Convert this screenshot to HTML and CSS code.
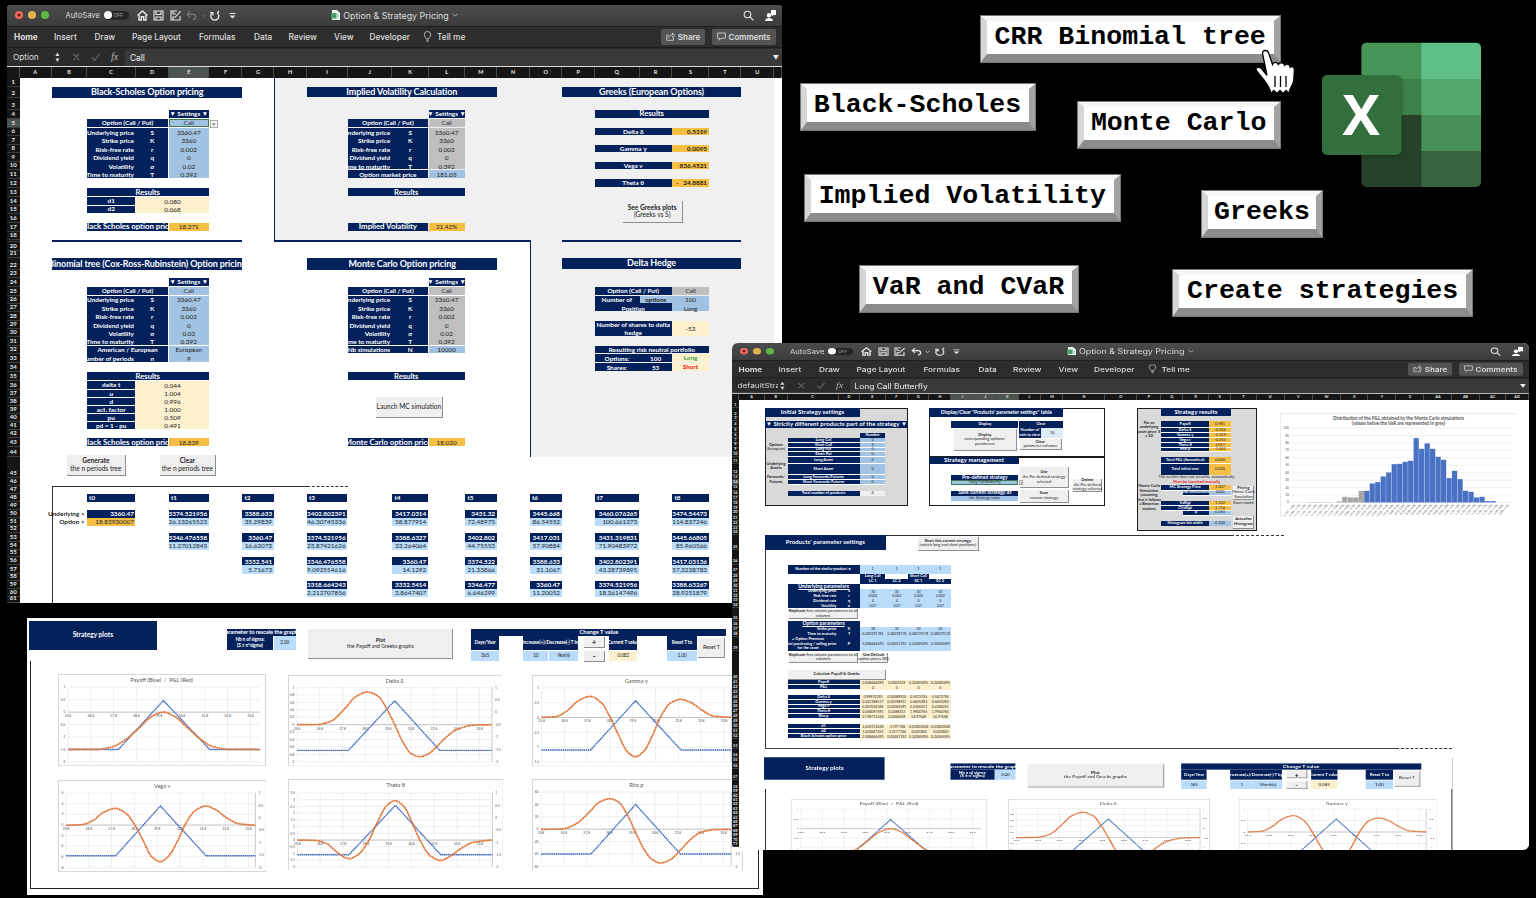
FILE: index.html
```html
<!DOCTYPE html>
<html lang="en">
<head>
<meta charset="utf-8">
<title>Option &amp; Strategy Pricing</title>
<link rel="stylesheet" href="styles.css">
</head>
<body>
<main class="stage">
  <section class="plots-panel" id="panel"></section>
  <section class="window window-main" id="win1"></section>
  <section class="window window-strategy" id="win2"></section>

  <div class="tag tag-crr">CRR Binomial tree</div>
  <div class="tag tag-bs">Black-Scholes</div>
  <div class="tag tag-mc">Monte Carlo</div>
  <div class="tag tag-iv">Implied Volatility</div>
  <div class="tag tag-greeks">Greeks</div>
  <div class="tag tag-var">VaR and CVaR</div>
  <div class="tag tag-strat">Create strategies</div>

  <svg class="excel" viewBox="1321 42 161 146" aria-label="Excel">
    <defs>
      <clipPath id="book"><rect x="1361.4" y="42.7" width="119.6" height="144.3" rx="5"/></clipPath>
      <filter id="soft" x="-20%" y="-20%" width="140%" height="140%"><feGaussianBlur stdDeviation="1.5"/></filter>
    </defs>
    <g clip-path="url(#book)">
      <rect x="1361" y="42" width="61" height="37" fill="#479658"/>
      <rect x="1421.4" y="42" width="60" height="37" fill="#5fc088"/>
      <rect x="1361" y="79" width="61" height="36" fill="#3d8049"/>
      <rect x="1421.4" y="79" width="60" height="36" fill="#53a96d"/>
      <rect x="1361" y="115" width="61" height="72" fill="#264129"/>
      <rect x="1421.4" y="115" width="60" height="36" fill="#479158"/>
      <rect x="1421.4" y="151" width="60" height="36" fill="#37633f"/>
      <rect x="1322" y="77" width="80" height="80" rx="5" fill="#0b2510" opacity=".35" filter="url(#soft)"/>
    </g>
    <rect x="1322" y="75" width="79.5" height="80" rx="5" fill="#336f3d"/>
    <text x="1361.3" y="135" class="excel-x" text-anchor="middle">X</text>
  </svg>

  <svg class="hand" viewBox="1253 47 44 50">
    <path d="M1262.6 54C1262 49.5 1267.5 49.5 1268.6 53L1272.5 64.5C1273.5 61.5 1277.3 61.6 1278.3 64.5C1280 61.8 1284 62.3 1284.7 65.3C1286.6 63.2 1290 64 1290.2 67.3C1292 65.8 1294.4 67 1294.4 70L1293.8 80C1293.3 85 1290 87 1288.8 93.4L1286 90.5L1283 93.4L1280 90.5L1277 93.4L1274 90.5L1270.8 93.4C1270 87 1266 82.5 1263.2 79L1256.2 70.5C1255 67 1259.5 66 1261.8 69L1267 75.3Z" fill="#fff" stroke="#000" stroke-width="1.3"/>
    <path d="M1275 76V87M1280.5 76V87M1286 76V87" stroke="#000" stroke-width="1.3"/>
  </svg>
</main>
<script src="app.js"></script>
</body>
</html>
```

FILE: styles.css
```css
* { box-sizing: border-box; }
body { margin: 0; background: #000; overflow: hidden; }
.stage { position: relative; width: 1536px; height: 898px; background: #000; overflow: hidden; font-family: Lato, "Open Sans", sans-serif; }

/* windows */
.window { position: absolute; overflow: hidden; background: #fff; }
.window-main { left: 7px; top: 5px; width: 775px; height: 598.4px; border-radius: 4px 4px 0 0; }
.window-strategy { left: 731.5px; top: 343.3px; width: 797.5px; height: 506.4px; border-radius: 6px; }
.chrome { height: 62px; display: flex; flex-direction: column; background: #2b2b2b; color: #dedede; font-family: Inter, "Open Sans", sans-serif; border-bottom: 1.5px solid #dcdcdc; }
.window-strategy .chrome { transform: scaleY(.818); transform-origin: 0 0; margin-bottom: -11.3px; }
.titlebar { height: 21.5px; display: flex; align-items: center; background: linear-gradient(#4b4b4b, #3c3c3c); border-bottom: 1px solid #1d1d1d; padding: 0 6px 0 8px; position: relative; }
.light { width: 8px; height: 8px; border-radius: 50%; margin-right: 5.2px; }
.red { background: radial-gradient(#7d1712 18%, #ee6a5e 35%); }
.amber { background: #e0b64c; }
.green { background: #5fb944; }
.autosave { font-size: 7.6px; margin-left: 11px; width: 38px; }
.toggle { width: 25px; height: 9px; border-radius: 5px; background: #262626; display: flex; align-items: center; font-size: 4.8px; color: #aaa; }
.toggle i { width: 8px; height: 8px; border-radius: 50%; background: #fff; margin-right: 2px; }
.quick { display: flex; align-items: center; margin-left: 8px; gap: 5.5px; }
.quick svg { width: 11px; height: 11px; }
.wtitle { position: absolute; left: 0; right: 0; display: flex; justify-content: center; align-items: center; gap: 3px; font-size: 8.9px; }
.wtitle svg { width: 9px; height: 10px; }
.wtitle .chev { width: 6px; height: 4px; }
.title-end { margin-left: auto; display: flex; align-items: center; gap: 11px; }
.title-end svg { width: 11px; height: 11px; }
.menu { height: 21.5px; display: flex; align-items: center; font-size: 8.3px; font-weight: 500; border-bottom: 1px solid #1c1c1c; background: #2d2d2d; padding-left: 7px; }
.menu span { white-space: nowrap; }
.menu span:first-child { font-weight: 700; }
.menu svg { width: 9px; height: 11px; margin-right: 5px; }
.pill { height: 15.5px; background: #545454; border-radius: 2px; display: flex; align-items: center; justify-content: center; margin-right: 6.5px; font-size: 8px; font-weight: 600; }
.pill svg { width: 9px; height: 9px; margin-right: 3px; }
.pill-share { width: 44px; margin-left: auto; }
.pill-comments { width: 64px; }
.formula { flex: 1; display: flex; align-items: center; font-size: 8.2px; }
.namebox { width: 40px; margin-left: 6px; overflow: hidden; white-space: nowrap; }
.formula svg { width: 68px; height: 14px; }
.entry { flex: 1; background: #393939; align-self: stretch; display: flex; align-items: center; padding: 0 3px 0 5px; color: #f0f0f0; margin-left: 4px; margin-top: 1px; font-size: 8.4px; }
.entry b { margin-left: auto; font-size: 6px; }

/* sheets */
.sheet { display: grid; position: relative; align-content: start; background: #fff; }
.sheet > * { min-width: 0; min-height: 0; }
.ch, .rh { background: #161616; color: #e8e8e8; font-weight: 700; display: flex; align-items: center; justify-content: center; line-height: 1; }
.ch { font-size: 5.5px; border-right: .7px solid #4a4a4a; }
.rh { font-size: 6px; align-items: flex-end; border-bottom: .7px solid #3d3d3d; padding-bottom: 1px; }
.window-strategy .ch, .window-strategy .rh { font-size: 3.8px; padding-bottom: .4px; }
.ch.on, .rh.on { background: #4c5450; }
.c { display: flex; align-items: center; justify-content: center; text-align: center; white-space: pre; line-height: 1.15; font-size: 6.4px; color: #222; margin-right: .9px; }
.m { margin-bottom: 1px; }
.full { margin: 0; }
.n { background: #04215c; color: #fff; font-weight: 700; }
.t { color: #fff; font-weight: 700; }
.h1 { font-size: 9px; letter-spacing: -.1px; }
.h2 { font-size: 7.6px; }
.h3 { font-size: 7.9px; letter-spacing: -.05px; }
.r { justify-content: flex-end; padding-right: 1.5px; }
.l { justify-content: flex-start; padding-left: 2px; }
.b { background: #a2c2e3; }
.lb { background: #b9dcfa; }
.vlb { background: #ddebf7; }
.g { background: #bfbfbf; }
.lg { background: #d9d9d9; }
.bg { background: #f0f0f0; }
.y { background: #fcf0ce; }
.o { background: #f5bf45; }
.bold { font-weight: 700; }
.posc { color: #3fa544; font-weight: 700; }
.negc { color: #e8201c; font-weight: 700; }
.u { text-decoration: underline; }
.sel { border: 1px solid #3d7a4d; }
.box { border: 1.2px solid #1c1c1c; margin: 0; }
.bt { border-top: 1.2px solid #333; margin: 0; }
.bl { border-left: 1.2px solid #333; margin: 0; }
.bb { border-bottom: 1.2px solid #444; margin: 0; }
.dash { border-top: 1.5px dashed #333; margin: 0; }
.dashb { border-bottom: 1.3px dashed #333; margin: 0; }
.nl { border-left: 1.7px solid #04215c; margin: 0; }
.nt { border-top: 2px solid #04215c; margin: 0; }
.nr { border-right: 1.7px solid #04215c; margin: 0; }
.line { background: #04215c; margin: 0; }
.s .c, .s.c { font-size: 4px; }
.wt { border-bottom: .8px solid #fff; }
.window-strategy .c { font-size: 3.9px; margin-right: .6px; }
.window-strategy .c.m { margin-bottom: .6px; }
.window-strategy .c.h1 { font-size: 6px; letter-spacing: .1px; }
.window-strategy .c.h2 { font-size: 5px; }
.window-strategy .c.full, .window-strategy .c.box { margin: 0; }
.window-strategy .c.v { font-size: 3.5px; }

/* objects that float over the cells */
.obj { position: absolute; }
.btn { background: #efefef; border-right: 1.2px solid #8e8e8e; border-bottom: 1.2px solid #8e8e8e; display: flex; flex-direction: column; align-items: center; justify-content: center; text-align: center; font-size: 6.6px; line-height: 1.14; color: #222; white-space: nowrap; }
.window-strategy .btn { font-size: 4px; }
.drop { background: #f4f4f4; border: .6px solid #aaa; color: #777; font-size: 5px; display: flex; align-items: center; justify-content: center; }

/* strategy plots */
.plots-panel { position: absolute; left: 27px; top: 618.4px; width: 736px; height: 277px; background: #fff; overflow: hidden; }
.plots { position: absolute; left: 2.5px; top: 3px; width: 729.5px; height: 268px; border: 1.6px solid #222; background: #fff; }
.window-strategy .plots { left: 33px; top: 414.4px; transform: scale(.9416, .775); transform-origin: 0 0; }
.plots .sheet { margin: -1.6px; }
.plots .c, .window-strategy .plots .c { font-size: 4.8px; margin: 0 .6px 0 0; letter-spacing: -.1px; }
.plots .c.h1, .window-strategy .plots .c.h1 { font-size: 6.6px; letter-spacing: 0; }
.plots .c.h2, .window-strategy .plots .c.h2 { font-size: 5.8px; }
.plots .btn, .window-strategy .plots .btn { font-size: 5.2px; }
.plots .btn.big, .window-strategy .plots .btn.big { font-size: 8px; font-weight: 700; line-height: 1; }
.chart { overflow: hidden; }
.chart text { font-family: Lato, sans-serif; fill: #555; font-size: 3.3px; }
.chart .ct { font-size: 5.6px; }
.frame { fill: #fff; stroke: #bdbdbd; stroke-width: .6; }
.grid { stroke: #dedede; stroke-width: .5; fill: none; }
.axis { stroke: #aaa; stroke-width: .6; }
.blue { stroke: #4169c0; stroke-width: 1.4; fill: none; stroke-dasharray: 1.6 .5; }
.orange { stroke: #df7438; stroke-width: 1.7; fill: none; stroke-dasharray: 2.2 .4; }
.chart .ht { font-size: 4.6px; font-weight: 700; }
.chart .tiny { font-size: 2.7px; }

/* labels on the desktop */
.tag { position: absolute; display: flex; align-items: center; justify-content: center; background: #fff; border-style: solid; border-width: 5px 6px 8px 6px; border-color: #f7f7f7 #a3a3a3 #8b8b8b #d6d6d6; font: 700 26.6px/1 "Liberation Mono", "Courier New", monospace; color: #000; white-space: nowrap; height: 45.4px; outline: .6px solid #777; outline-offset: -.6px; }
.tag-crr { left: 980.8px; top: 16.3px; width: 298.8px; }
.tag-bs { left: 800.5px; top: 84.4px; width: 234px; }
.tag-mc { left: 1077.8px; top: 102.4px; width: 201.8px; }
.tag-iv { left: 804.8px; top: 175.4px; width: 315px; }
.tag-greeks { left: 1201.6px; top: 191.2px; width: 120.8px; }
.tag-var { left: 859.5px; top: 266.2px; width: 218px; }
.tag-strat { left: 1173px; top: 270.2px; width: 299.3px; }
.excel { position: absolute; left: 1321px; top: 42px; width: 161px; height: 146px; }
.excel-x { font: 700 56px "Open Sans", sans-serif; fill: #fff; }
.hand { position: absolute; left: 1253px; top: 47px; width: 44px; height: 50px; }
```

FILE: app.js
```js
const NS = { stroke: 'fill="none" stroke="#e6e6e6" stroke-width="1.1"' };

/* ---------- window chrome ---------- */
function chrome(name, entry, undo) {
  const menus = [['Home', 40], ['Insert', 40.5], ['Draw', 37.5], ['Page Layout', 67], ['Formulas', 55], ['Data', 34.5], ['Review', 45.5], ['View', 35.5], ['Developer', 53.5]];
  return `<header class="chrome">
  <div class="titlebar">
    <i class="light red"></i><i class="light amber"></i><i class="light green"></i>
    <span class="autosave">AutoSave</span><span class="toggle"><i></i>OFF</span>
    <div class="quick">
      <svg viewBox="0 0 11 11" ${NS.stroke}><path d="M.6 5.6L5.5 1L10.4 5.6M2 5V10H4.3V6.8H6.7V10H9V5" stroke-width="1.4"/></svg>
      <svg viewBox="0 0 11 11" ${NS.stroke}><path d="M1 1H10V10H1ZM3 1V4.5H8V1M3 10V7H8V10"/></svg>
      <svg viewBox="0 0 11 11" ${NS.stroke}><path d="M10 6V10H1V1H7M3 1V4H6M3 10V7H5M5 7.5L10.6 1.2"/></svg>
      <svg viewBox="0 0 11 11" fill="none" stroke="${undo}" stroke-width="1.3"><path d="M4 1.5L1.2 4.3L4 7M1.4 4.3H7C10.5 4.3 10.5 9.5 7 9.5"/></svg>
      <svg viewBox="0 0 11 11" style="width:5px;margin:0 -2px" fill="none" stroke="${undo}" stroke-width="1.8"><path d="M1 4L5.5 8L10 4"/></svg>
      <svg viewBox="0 0 11 11" ${NS.stroke}><path d="M3 3.2A4 4 0 1 0 8.3 3M1 2.6H4V5.6M8.4 3L10 1" stroke-width="1.3"/></svg>
      <svg viewBox="0 0 11 11" style="margin-left:1px" fill="#e6e6e6"><path d="M2.5 3H8.5V4H2.5ZM2.5 5.5H8.5L5.5 8.5Z"/></svg>
    </div>
    <div class="wtitle"><svg viewBox="0 0 9 10"><path d="M1 0H6L9 3V10H1Z" fill="#e9f3ec"/><rect y="3" width="5.5" height="5.5" fill="#4d9d73"/><path d="M5.5 5H8M5.5 7H8" stroke="#8fc3a5"/></svg><span>Option &amp; Strategy Pricing</span><svg class="chev" viewBox="0 0 6 4" fill="none" stroke="#aaa"><path d="M.5 .7L3 3.2L5.5 .7"/></svg></div>
    <div class="title-end">
      <svg viewBox="0 0 11 11" ${NS.stroke}><circle cx="4.5" cy="4.5" r="3.3"/><path d="M7 7L10.4 10.4"/></svg>
      <svg viewBox="0 0 11 11" fill="#fff"><circle cx="4" cy="5.2" r="2.2"/><path d="M0 11C0 7 8 7 8 11ZM6 0H11V5H8.5L7 6.5V5H6Z"/></svg>
    </div>
  </div>
  <nav class="menu">${menus.map(([t, w]) => `<span style="width:${w}px">${t}</span>`).join('')}
    <svg viewBox="0 0 9 12" fill="none" stroke="#cfcfcf" stroke-width=".9"><path d="M3 8.5C3 6.8 1 6.5 1 4A3.5 3.5 0 0 1 8 4C8 6.5 6 6.8 6 8.5ZM3.2 10H5.8M3.6 11.3H5.4"/></svg><span>Tell me</span>
    <div class="pill pill-share"><svg viewBox="0 0 9 9" fill="none" stroke="#ddd" stroke-width=".8"><path d="M3 3H.8V8.3H7.5V6M2.6 6C3 3.8 4.5 3 6.5 3V1L8.7 3.6L6.5 5.8V4.2"/></svg>Share</div>
    <div class="pill pill-comments"><svg viewBox="0 0 9 9" fill="none" stroke="#ddd" stroke-width=".8"><path d="M.6 1H8.4V6.3H4L2.4 8.2V6.3H.6Z"/></svg>Comments</div>
  </nav>
  <div class="formula"><span class="namebox">${name}</span>
    <svg viewBox="0 0 68 14"><path d="M2.4 6L4.4 2.5L6.4 6ZM2.4 8.5L4.4 12L6.4 8.5Z" fill="#ddd"/><path d="M20.5 4L26 10M26 4L20.5 10M39 7.5L41.5 10.3L46.5 4" fill="none" stroke="#666" stroke-width="1.2"/><text x="58" y="10" font-family="Liberation Serif" font-style="italic" font-size="10" fill="#bbb">fx</text></svg>
    <div class="entry">${entry}<b>▼</b></div></div>
</header>`;
}

/* ---------- spreadsheet grid ---------- */
const colNo = s => [...s].reduce((n, ch) => n * 26 + ch.charCodeAt(0) - 64, 0);
const colName = n => n > 26 ? 'A' + String.fromCharCode(38 + n) : String.fromCharCode(64 + n);
const tracks = b => b.slice(1).map((v, i) => +(v - b[i]).toFixed(2) + 'px').join(' ');

function area(range) {
  const [a, z = a] = range.split(':');
  const p = /([A-Z]+)(\d+)/;
  const [, ac, ar] = a.match(p), [, zc, zr] = z.match(p);
  return `grid-area:${+ar + 1}/${colNo(ac) + 1}/${+zr + 2}/${colNo(zc) + 2}`;
}
const cell = ([range, cls, text = '']) => `<div class="c ${cls}" style="${area(range)}">${text}</div>`;

function sheet({ xs, ys, cells, objects = '', onCols = '', onRows = '', heads = true, rowNames }) {
  let h = '';
  if (heads) {
    h += '<div class="ch" style="grid-area:1/1"></div>';
    for (let i = 1; i < xs.length - 1; i++) h += `<div class="ch ${onCols.includes(colName(i)) ? 'on' : ''}" style="grid-area:1/${i + 1}">${i > 29 || (xs.length < 25 && i > 21) ? (i === 30 ? 'AD' : '') : colName(i)}</div>`;
    for (let i = 1; i < ys.length - 1; i++) h += `<div class="rh ${onRows === i ? 'on' : ''}" style="grid-area:${i + 1}/1">${ys[i + 1] - ys[i] < 3 ? '' : i}</div>`;
  }
  return `<div class="sheet" style="grid-template-columns:${tracks(xs)};grid-template-rows:${tracks(ys)}">${h}${cells.map(cell).join('')}${objects}</div>`;
}
/* object box given in the coordinates of the sheet's own rulers */
const at = (s, x, y, x2, y2) => `left:${(x - s.xs[0]).toFixed(1)}px;top:${(y - s.ys[0]).toFixed(1)}px;width:${(x2 - x).toFixed(1)}px;height:${(y2 - y).toFixed(1)}px`;
const btn = (s, x, y, x2, y2, html, cls = '') => `<div class="obj btn ${cls}" style="${at(s, x, y, x2, y2)}"><span>${html}</span></div>`;

/* ---------- charts ---------- */
function smooth(p) {
  const n = p.length, d = [], m = [];
  for (let i = 0; i < n - 1; i++) d[i] = (p[i + 1][1] - p[i][1]) / (p[i + 1][0] - p[i][0]);
  m[0] = d[0]; m[n - 1] = d[n - 2];
  for (let i = 1; i < n - 1; i++) m[i] = d[i - 1] * d[i] <= 0 ? 0 : 2 * d[i - 1] * d[i] / (d[i - 1] + d[i]);
  let s = `M${p[0]}`;
  for (let i = 0; i < n - 1; i++) {
    const k = (p[i + 1][0] - p[i][0]) / 3;
    s += `C${p[i][0] + k} ${p[i][1] + m[i] * k} ${p[i + 1][0] - k} ${p[i + 1][1] - m[i + 1] * k} ${p[i + 1]}`;
  }
  return s;
}
function chart(c) {
  const [fx, fy, fx2, fy2] = c.frame, [px, py, px2, py2] = c.plot;
  let g = '', t = '';
  c.left.forEach((v, i) => {
    const y = py + (py2 - py) * i / (c.left.length - 1);
    g += `M${px} ${y}H${px2}`;
    t += `<text x="${px - 2.5}" y="${y + 1.2}" text-anchor="end">${v}</text>`;
  });
  for (let i = 0; px + i * 22.8 < px2; i++) {
    const x = px + i * 22.8;
    g += `M${x} ${py}V${py2}`;
    t += `<text x="${x}" y="${c.zero + 5}" text-anchor="middle">${(25.8 + i).toFixed(1)}</text>`;
  }
  if (c.right) [1, 0.5, 0, -0.5, -1, -1.5, -2].forEach((v, i) => t += `<text x="${px2 + 3}" y="${py + (py2 - py) * i / 6 + 1.2}">${v}</text>`);
  return `<svg class="obj chart" style="left:${fx - 29.5}px;top:${fy - 621.4}px;width:${fx2 - fx}px;height:${fy2 - fy}px" viewBox="${fx} ${fy} ${fx2 - fx} ${fy2 - fy}">
  <rect class="frame" x="${fx + .3}" y="${fy + .3}" width="${fx2 - fx - .6}" height="${fy2 - fy - .6}"/><path class="grid" d="${g}"/><path class="axis" d="M${px} ${c.zero}H${px2}${c.right ? `M${px2} ${py}V${py2}` : ''}"/>
  <text class="ct" x="${c.tx}" y="${fy + 7.6}" text-anchor="middle">${c.title}</text>${t}
  <path class="blue" d="M${c.blue.map(q => q.join(' ')).join('L')}"/><path class="orange" d="${smooth(c.orange)}"/></svg>`;
}
const charts = [
  { title: 'Payoff (Blue)&#160; / &#160;P&amp;L (Red)', tx: 162, frame: [58.3, 674.5, 266.3, 766.7], plot: [68.3, 687.7, 260, 762.3], zero: 712.7, left: [1, 0.5, 0, -0.5, -1, -1.5, -2],
    blue: [[68.3, 750], [118.7, 750], [163.7, 701], [210, 750], [260, 750]],
    orange: [[68.3, 750], [98, 749.8], [112, 747.5], [126, 740], [140, 728], [152, 717], [163.7, 712.7], [175, 717], [187, 727.5], [200, 739], [213, 747], [228, 749.8], [260, 750]] },
  { title: 'Delta δ', tx: 395, right: 1, frame: [288.3, 675.3, 502.9, 766.7], plot: [297.3, 687.7, 492.3, 762.3], zero: 725, left: [1, 0.8, 0.6, 0.4, 0.2, 0, -0.2, -0.4, -0.6, -0.8, -1],
    blue: [[297.3, 750.7], [348.7, 750.7], [395, 701], [440, 750.7], [492.3, 750.7]],
    orange: [[297.3, 725], [318, 724.8], [332, 721], [345, 709], [356, 697], [367.7, 692.3], [379, 697], [387, 709], [395, 725], [403, 742], [411, 753.5], [420, 757], [429, 754], [437, 747], [447, 737], [458, 729.5], [475, 725.4], [492.3, 725]] },
  { title: 'Gamma γ', tx: 637, right: 1, frame: [532.7, 675.3, 743.3, 766.7], plot: [542.3, 688.2, 731.9, 762.3], zero: 717.8, left: [1, 0.5, 0, -0.5, -1, -1.5],
    blue: [[542.3, 750.3], [591.3, 750.3], [636.3, 701], [681.7, 750.3], [731.9, 750.3]],
    orange: [[542.3, 717.7], [556, 717], [568, 711], [579, 701], [591, 696.7], [602, 703], [611, 718], [620, 737], [628, 752], [636.3, 757], [645, 751], [653, 736], [662, 716], [671, 703.5], [681, 699.7], [691, 702.5], [702, 710], [714, 716.3], [731.9, 717.7]] },
  { title: 'Vega ν', tx: 162.5, right: 1, frame: [58.3, 780.3, 266.7, 872.3], plot: [66.3, 793.3, 255.7, 867.7], zero: 825.4, left: [6, 4, 2, 0, -2, -4, -6, -8],
    blue: [[66.3, 856], [116, 856], [160.7, 806.3], [206.3, 856], [255.7, 856]],
    orange: [[66.3, 825.7], [82, 825], [93, 821], [104, 812.5], [115.7, 808.7], [126, 813.5], [134, 823.5], [144, 842], [152, 857], [160.7, 862], [170, 855], [178, 841], [187, 822], [196, 810.5], [206.3, 806.3], [216, 810], [226, 817.5], [239, 824], [255.7, 825.7]] },
  { title: 'Theta θ', tx: 396, right: 1, frame: [288.3, 779.3, 503.7, 871], plot: [297.7, 793.3, 492.7, 867.3], zero: 840.4, left: [3.5, 3, 2.5, 2, 1.5, 1, 0.5, 0, -0.5, -1, -1.5, -2],
    blue: [[297.7, 855], [349.3, 855], [395.7, 805.7], [441, 855], [492.7, 855]],
    orange: [[297.7, 840.3], [316, 840.8], [327, 844], [338, 853], [349.3, 859], [359, 854.5], [369, 841], [378, 822], [387, 806], [395.3, 801], [404, 806.5], [412, 822], [421, 842], [431, 856.5], [441, 860.7], [450, 857], [461, 849], [474, 842.5], [492.7, 840.3]] },
  { title: 'Rho ρ', tx: 637, right: 1, frame: [532.7, 779.3, 743.3, 871], plot: [541.7, 792.3, 731.9, 866.7], zero: 829.5, left: [60, 40, 20, 0, -20, -40, -60],
    blue: [[541.7, 854.3], [591.7, 854.3], [636.3, 804.7], [681, 854.3], [731.9, 854.3]],
    orange: [[541.7, 829.7], [563, 829.2], [577, 824], [590, 812.5], [600, 802.5], [610.7, 799], [620, 803], [628, 815], [636, 832], [645, 850], [653, 860], [661.7, 863.3], [671, 860], [681, 850.5], [691, 840], [702, 832.5], [716, 829.9], [731.9, 829.7]] }
];

function plots(step, unit, t, list) {
  const s = { xs: [29.5, 158, 227.3, 274.3, 297, 309, 454, 472, 500, 524, 549.5, 579.5, 610, 638.5, 668, 697.8, 727.6], ys: [621.4, 629.3, 636.6, 650.3, 651.2, 661.7], heads: false };
  /* here A1 is the first track, so the areas start one line earlier than in a headed sheet */
  const cells = [['A', 0, 'A', 2, 'n h1', 'Strategy plots'], ['C', 1, 'D', 1, 'n h2', 'Parameter to rescale the graphs'], ['C', 2, 'C', 2, 'n', 'Nb n of sigma:\n(S ± n*sigma)'], ['D', 2, 'D', 2, 'lb', '2.00'],
    ['H', 1, 'P', 1, 'n h2 h1', 'Change T value'], ['H', 2, 'H', 2, 'n', 'Days/Year'], ['H', 4, 'H', 4, 'lb', '365'], ['J', 2, 'K', 2, 'n', 'Increase(+)/Decrease(-) T by'], ['J', 4, 'J', 4, 'lb', step], ['K', 4, 'K', 4, 'lb', unit],
    ['M', 2, 'M', 2, 'n', 'Current T value'], ['M', 4, 'M', 4, 'y', t], ['O', 2, 'O', 2, 'n', 'Reset T to'], ['O', 4, 'O', 4, 'lb', '1.00']]
    .map(([a, r, z, r2, cls, tx]) => `<div class="c ${cls}" style="grid-area:${r + 1}/${colNo(a)}/${r2 + 2}/${colNo(z) + 1}">${tx}</div>`).join('');
  const o = btn(s, 309, 629.7, 454, 659.7, '<b>Plot</b><br>the Payoff and Greeks graphs') + btn(s, 584.5, 638, 606, 648.3, '+', 'big') + btn(s, 584.5, 652, 606, 662.3, '-', 'big') + btn(s, 699, 638.5, 726, 659, 'Reset T');
  return `<div class="plots"><div class="sheet" style="grid-template-columns:${tracks(s.xs)};grid-template-rows:${tracks(s.ys)}">${cells}${o}${list.map(chart).join('')}</div></div>`;
}

/* ---------- window 1: pricing ---------- */
const s1 = {
  xs: [7, 19.5, 52, 87, 136.3, 169, 209.5, 242.5, 274.5, 307, 348, 392.5, 428.7, 465.5, 497.5, 530, 562.5, 595, 639.7, 672.5, 709.5, 741.5, 774, 782],
  ys: [67, 78, 87, 98, 109.5, 118.7, 128, 136.5, 145, 153.5, 162, 170.5, 179, 188, 197.4, 205.6, 213.6, 223, 232, 240, 242.5, 251, 258, 270, 278, 287, 295.6, 304, 312.5, 321, 329.5, 337.5, 346, 354.3, 363, 372, 381.5, 390, 398, 406, 414, 422, 430, 438.5, 447.5, 457, 478, 486, 494, 502.5, 509.7, 518, 526.5, 533.5, 541.7, 550, 557.2, 565.5, 574, 581.2, 589.2, 597.4, 603.4],
  onCols: 'E', onRows: 5
};
function block(a, b, v, r, rows, vc) {
  const out = [[`${v}${r - 1}`, 'n m bold', '▼ Settings ▼'], [`${a}${r}:${b}${r}`, 'n m', 'Option (Call / Put)'], [`${v}${r}`, vc + ' m', 'Call'], [`${a}${r + 1}:${b}${r + rows.length}`, 'n m'], [`${v}${r + 1}:${v}${r + rows.length}`, vc + ' m']];
  rows.forEach(([l, s, x], i) => out.push([`${a}${r + 1 + i}`, 't r', l], [`${b}${r + 1 + i}`, 't', s], [`${v}${r + 1 + i}`, '', x]));
  return out;
}
const base = [['Underlying price', 'S', '3360.47'], ['Strike price', 'K', '3360'], ['Risk-free rate', 'r', '0.002'], ['Dividend yield', 'q', '0'], ['Volatility', 'σ', '0.02'], ['Time to maturity', 'T', '0.392']];
const noVol = base.filter(r => r[0] !== 'Volatility');
const tree = {
  C: [['3360.47', '18.83930007']],
  E: [['3374.521956', '26.13265523'], ['3346.476558', '11.27012845']],
  G: [['3388.633', '35.29839'], ['3360.47', '16.62073'], ['3332.541', '5.71673']],
  I: [['3402.802391', '46.30745336'], ['3374.521956', '23.87421626'], ['3346.476558', '9.092554616'], ['3318.664243', '2.212707856']],
  K: [['3417.0314', '58.877914'], ['3388.6327', '33.264064'], ['3360.47', '14.1292'], ['3332.5414', '3.8647407']],
  M: [['3431.32', '72.48975'], ['3402.802', '44.75553'], ['3374.522', '21.33866'], ['3346.477', '6.646299']],
  O: [['3445.668', '86.54552'], ['3417.031', '57.90884'], ['3388.633', '31.1067'], ['3360.47', '11.20052']],
  Q: [['3460.076265', '100.661273'], ['3431.319831', '71.90483972'], ['3402.802391', '43.38739895'], ['3374.521956', '18.36147496']],
  S: [['3474.54473', '114.837246'], ['3445.66805', '85.960566'], ['3417.03136', '57.3238783'], ['3388.63267', '28.9251879']]
};
const cells1 = [
  ['H1:U18', 'bg nl'], ['O19:U44', 'bg nl'], ['H19:N19', 'nt'],
  ['B19:F19', 'line'], ['P19:T19', 'line'],
  ['B2:F2', 'n h1 full', 'Black-Scholes Option pricing'], ['I2:M2', 'n h1 m', 'Implied Volatility Calculation'], ['P2:T2', 'n h1 m', 'Greeks (European Options)'],
  ['B22:F22', 'n h1 full', 'Binomial tree (Cox-Ross-Rubinstein) Option pricing'], ['I22:M22', 'n h1 full', 'Monte Carlo Option pricing'], ['P22:T22', 'n h1 m', 'Delta Hedge'],
  ...block('C', 'D', 'E', 5, base, 'b'), ['E5', 'sel m'],
  ['C13:E13', 'n m h2', 'Results'], ['C14', 'n m', 'd1'], ['C15', 'n m', 'd2'], ['D14:E15', 'y m'], ['D14:E14', '', '0.080'], ['D15:E15', '', '0.068'],
  ['C17:D17', 'n m h3', 'Black Scholes option price'], ['E17', 'o m', '18.371'],
  ...block('J', 'K', 'L', 5, noVol, 'g'), ['J11:K11', 'n m', 'Option market price'], ['L11', 'b m', '181.05'],
  ['J13:L13', 'n m h2', 'Results'], ['J17:K17', 'n m h3', 'Implied Volatility'], ['L17', 'o m', '21.42%'],
  ['Q4:S4', 'n m h2', 'Results'],
  ...[['Delta δ', '0.5319'], ['Gamma γ', '0.0095'], ['Vega ν', '836.4521'], ['Theta θ', '-&#160;&#160; 24.8881']].flatMap(([l, v], i) => [[`Q${6 + 2 * i}:R${6 + 2 * i}`, 'n m', l], [`S${6 + 2 * i}`, 'o m r bold', v]]),
  ...block('C', 'D', 'E', 25, base, 'b'), ['C32:D33', 'n m'], ['E32:E33', 'b m'], ['C32:D32', 't', 'American / European'], ['E32', '', 'European'], ['C33', 't r', 'Number of periods'], ['D33', 't', 'n'], ['E33', '', '9'],
  ['C35:E35', 'n m h2', 'Results'], ['D36:E41', 'y m'],
  ...[['delta t', '0.044'], ['u', '1.004'], ['d', '0.996'], ['act. factor', '1.000'], ['pu', '0.509'], ['pd = 1 - pu', '0.491']].flatMap(([l, v], i) => [[`C${36 + i}`, 'n wt', l], [`D${36 + i}:E${36 + i}`, '', v]]),
  ['C43:D43', 'n m h3', 'Black Scholes option price'], ['E43', 'o m', '18.839'],
  ...block('J', 'K', 'L', 25, base, 'g'), ['J32:K32', 'n m'], ['J32', 't r', 'Nb simulations'], ['K32', 't', 'N'], ['L32', 'b m', '10000'],
  ['J35:L35', 'n m h2', 'Results'], ['J43:K43', 'n m h3', 'Monte Carlo option price'], ['L43', 'o m', '18.020'],
  ['Q25:R25', 'n m', 'Option (Call / Put)'], ['S25', 'g m', 'Call'], ['Q26:R27', 'n m'], ['Q26', 't', 'Number of'], ['R26', 'b m bold', 'options'], ['Q27:R27', 't', 'Position'], ['S26:S27', 'b m'], ['S26', '', '100'], ['S27', '', 'Long'],
  ['Q29:R30', 'n m', 'Number of shares to delta\nhedge'], ['S29:S30', 'y m', '-53'],
  ['Q32:S32', 'n m', 'Resulting risk neutral portfolio'], ['Q33:R33', 'n m'], ['Q33', 't', 'Options:'], ['R33', 't', '100'], ['S33', 'y m posc', 'Long'], ['Q34:R34', 'n m'], ['Q34', 't', 'Shares:'], ['R34', 't', '53'], ['S34', 'y m negc', 'Short'],
  ['B47:H61', 'bl bt'], ['I47', 'dash'],
  ['B50', 'r bold', 'Underlying &gt;'], ['B51', 'r bold', 'Option &gt;']
];
Object.entries(tree).forEach(([c, nodes], i) => {
  cells1.push([`${c}48`, 'n l', 't' + i]);
  nodes.forEach(([u, o], k) => cells1.push([`${c}${50 + 3 * k}`, 'n r', u], [`${c}${51 + 3 * k}`, (i ? 'lb' : 'o') + ' r', o]));
});
const objects1 = btn(s1, 622.7, 201, 682.7, 222.5, '<b>See Greeks plots</b><br>(Greeks vs S)') + btn(s1, 66.7, 455, 126, 476, '<b>Generate</b><br>the n periods tree') + btn(s1, 160, 455, 215.7, 476, '<b>Clear</b><br>the n periods tree') + btn(s1, 376, 397, 442.8, 418, 'Launch MC simulation')
  + `<div class="obj drop" style="${at(s1, 210, 119.5, 217.5, 128)}">▼</div>`;

/* ---------- window 2: strategies ---------- */
const ys2 = [394.3, 400.3, 408.2, 417.3, 421.7, 428, 433.3, 438.2, 443.3, 448, 452.7, 457.5, 464.7, 475.3, 480.3, 485.3, 490.9, 496.3, 501.3, 506.5, 511.3, 516, 521.3, 526.3, 531.3, 535.5, 550.9, 565, 574, 579.5, 584.7, 589.7, 594.5, 599.3, 604, 608.7, 621.7, 627.3, 632.5, 637.5, 651.5, 681, 685.9, 690.7, 695.5, 700.5, 705.3, 710, 714.7, 720, 724.7, 729.9, 734.7, 739.7, 749.5, 758.5, 764.2, 769.5, 780.7, 790.7];
while (ys2.length < 73) ys2.push(ys2[ys2.length - 1] + 4.4);
const s2 = {
  xs: [731.5, 739, 765, 787.5, 838.5, 860.2, 885.7, 908, 929.3, 951.5, 974.6, 997, 1018.8, 1041.5, 1063.5, 1105.5, 1137.3, 1161.5, 1183.3, 1209.5, 1231.3, 1256.7, 1285, 1313, 1341, 1368.6, 1396.5, 1424.6, 1452.6, 1479.8, 1506.5, 1529],
  ys: ys2, onCols: 'IJK', onRows: 14
};
const quad = (r, vals, cls) => ['E', 'F', 'G', 'H'].map((c, i) => [`${c}${r}`, cls, vals[i]]);
const param = (r, l, s, vals) => [[`C${r}`, 't r', l], [`D${r}`, 't', s], ...quad(r, vals, 'v full')];
const cells2 = [
  ['B2:F18', 'lg box'], ['B2:D2', 'n h1 full', 'Initial Strategy settings'], ['B4:F4', 'n h1 full', '▼ Strictly different products part of the strategy ▼'],
  ['E6', 'n', 'Number'],
  ...[['Long Call', 7], ['Short Call', 8], ['Long Put', 9], ['Short Put', 10], ['Long Asset', 11], ['Short Asset', 12], ['Long Forwards/Futures', 13], ['Short Forwards/Futures', 14]].flatMap(([l, r]) => [[`C${r}:D${r}`, 'n wt', l], [`E${r}`, 'b wt', r === 7 || r === 8 ? '2' : '0']]),
  ['B7:B10', '', '<span><b>Options</b>\n(European)</span>'], ['B11:B12', 'bold', 'Underlying\nAssets'], ['B13:B14', 'bold', 'Forwards/\nFutures'],
  ['C16:D16', 'n', 'Total number of products'], ['E16', 'bg', '4'],
  ['H2:N10', 'box'], ['H11:N18', 'box'], ['H2:M2', 'n h2 full', 'Display/Clear "Products\' parameter settings" table'],
  ['I4:K4', 'n', 'Display'], ['L4:M4', 'n', 'Clear'], ['L5:L6', 'n', 'Number of\ncols to clear'], ['M5:M6', 'vlb', '10'],
  ['H11:K11', 'n h1 full', 'Strategy management'], ['I13:K13', 'n h2', 'Pre-defined strategy'], ['I14:K14', 'b sel', 'Long Call Butterfly'], ['I16:K16', 'n h2', 'Save current strategy as'], ['I17:K17', 'b', 'the Strategy name'],
  ['P2:T23', 'lg box'], ['Q2:S2', 'n h1 m', 'Strategy results'],
  ['P4:P6', 'bold', 'For an\nunderlying\nasset price&#160; S\n= 30'],
  ...[['Payoff', '0.981'], ['Delta δ', '-0.014'], ['Gamma γ', '-2.319'], ['Vega ν', '-0.453'], ['Theta θ', '3.017'], ['Rho ρ', '-1.043']].flatMap(([l, v], i) => [[`Q${4 + i}:R${4 + i}`, 'n wt', l], [`S${4 + i}`, 'o wt', v]]),
  ['Q11:R11', 'n wt', 'Total P&amp;L (theoretical)'], ['S11', 'o wt', '0.000'], ['Q12:R12', 'n', 'Total initial cost'], ['S12', 'o', '0.000'],
  ['P13:T13', '', 'This section does not actualise automatically.'], ['P14:T14', 'negc', 'Must be launched manually'],
  ['Q15:R15', 'n wt', 'MC Strategy Price'], ['S15', 'o wt', '1.007'], ['R16', 'n wt', 'Nb simulations'], ['S16', 'b wt', '1000'],
  ['P15:P19', 'bold', 'Monte Carlo\nSimulation\n(assuming\nthat it follows\na Brownian\nmotion)'],
  ['Q18:R18', 'n wt', 'VaR(p)'], ['S18', 'o wt', '1.322'], ['Q19:R19', 'n wt', 'CVaR(p)'], ['S19', 'o wt', '1.714'], ['R20', 'n wt', 'p'], ['S20', 'b wt', '0.050'],
  ['T18', '', 'Exact match'], ['Q22:R22', 'n', 'Histogram bin width'], ['S22', 'b', '0.100'],
  ['B25:S53', 'bl bt'], ['T25:U25', 'dash'], ['B53:Y53', 'bb'], ['Z53:AA53', 'dashb'],
  ['B25:E25', 'n h1 full', 'Products\' parameter settings'],
  ['C27:D27', 'n', 'Number of the similar product ►'], ['E27:H27', 'lb'], ...quad(27, [1, 1, 1, 1], ''),
  ['E28', 'n', 'Long Call'], ['G28', 'n', 'Short Call'], ['E29:H29', 'n full'], ...quad(29, ['LC 1', 'LC 2', 'SC 1', 'SC 2'], 't'),
  ['C30:D34', 'n'], ['E31:H34', 'lb'], ['C30:D30', 't h2 u', 'Underlying parameters'],
  ...param(31, 'Underlying price', 'S', [30, 30, 30, 30]), ...param(32, 'Risk free rate', 'r', ['0.002', '0.002', '0.002', '0.002']), ...param(33, 'Dividend rate', 'q', [0, 0, 0, 0]), ...param(34, 'Volatility', 'σ', ['0.07', '0.07', '0.07', '0.07']),
  ['C36:D39', 'n'], ['E37:H39', 'lb'], ['C36:D36', 't h2 u', 'Option parameters'],
  ...param(37, 'Strike price', 'K', [28, 32, 30, 30]), ...param(38, 'Time to maturity', 'T', ['0.082191781', '0.08219178', '0.08219178', '0.08219178']),
  ...param(39, '+ Option Premium\n+ initial purchasing / selling price\nfor the asset', 'P', ['2.008444493', '0.00051193', '0.24265095', '0.24265095']),
  ['E41:H42', 'y'], ['E44:H48', 'y'], ['E50:H52', 'y'],
  ...[[41, 'Payoff', ['0.008444493', '0.0003159', '0.24265095', '0.24265095']], [42, 'P&amp;L', [0, 0, 0, 0]],
    [44, 'Delta δ', ['0.99970392', '0.00089203', '0.5072705', '0.5072705']], [45, 'Gamma γ', ['0.001188517', '0.00398911', '0.6625283', '0.6625283']], [46, 'Vega ν', ['0.007030585', '0.02065591', '0.4306251', '0.4306251']], [47, 'Theta θ', ['0.058097491', '0.0288313', '1.9900765', '1.9900765']], [48, 'Rho ρ', ['27.98713524', '0.0266509', '14.97548', '14.97548']],
    [50, 'd1', ['3.450112628', '-3.197708', '0.01822508', '0.01822508']], [51, 'd2', ['3.430047051', '-3.2177744', '-0.001843', '-0.001843']], [52, 'Black Scholes option price', ['2.008444493', '0.00051193', '0.24265095', '0.24265095']]]
    .flatMap(([r, l, v]) => [[`C${r}:D${r}`, 'n wt u', l], ...quad(r, v, 'v full')])
];

function histogram() {
  const tops = { 3: 487, 4: 487, 5: 487, 6: 487, 8: 485, 9: 471, 10: 473, 11: 473, 12: 453, 13: 453, 14: 431, 15: 427, 16: 410, 17: 398, 18: 373, 19: 372, 20: 366, 21: 363, 22: 295, 23: 327, 24: 311, 25: 327, 26: 351, 27: 360, 28: 415, 29: 393, 30: 418, 31: 453, 32: 456, 33: 473, 34: 471, 35: 484, 36: 484 };
  let g = '', t = '', bars = '';
  for (let i = 0; i <= 10; i++) {
    const y = 428.3 + i * 7.44;
    g += `M1291 ${y}H1512`;
    t += `<text x="1288.5" y="${y + 1}" text-anchor="end">${100 - 10 * i}</text>`;
  }
  for (let i = 0; i < 40; i++) {
    const x = 1292.3 + i * 5.49;
    const a = -1.9 + i * 0.1;
    t += `<text class="tiny" text-anchor="end" transform="translate(${x + 2} 505.5) rotate(-48)">(${a.toFixed(2)}; ${(a + .1).toFixed(2)}]</text>`;
    if (tops[i]) bars += `<rect x="${x}" y="${340 + tops[i] / 3}" width="5.2" height="${(488 - tops[i]) / 3}" fill="${i < 13 ? '#a5a5a5' : '#4a72c4'}"/>`;
  }
  return `<svg class="obj chart" style="${at(s2, 1279.5, 413.2, 1517.3, 517.8)}" viewBox="1279.5 413.2 237.8 104.6"><rect class="frame" x="1279.8" y="413.5" width="237.2" height="104" style="stroke:#ddd"/>
  <text class="ht" x="1398" y="420.4" text-anchor="middle">Distribution of the P&amp;L obtained by the Monte Carlo simulations</text><text class="ht" x="1398" y="424.8" text-anchor="middle">(values below the VaR are represented in grey)</text><path class="grid" d="${g}"/>${bars}${t}</svg>`;
}
const objects2 = btn(s2, 954, 429.3, 1016.8, 451.5, '<b>Display</b><br>corresponding options/<br>parameters', 'mid') + btn(s2, 1019.7, 439.2, 1061.7, 450.8, '<b>Clear</b><br>parameter columns')
  + btn(s2, 1020.3, 467.7, 1068.7, 488.5, '<b>Use</b><br>the Pre-defined strategy<br>selected') + btn(s2, 1020.3, 490, 1068.7, 503.5, '<b>Save</b><br>current strategy') + btn(s2, 1073.3, 479, 1102.5, 492.8, '<b>Delete</b><br>the Pre-defined<br>strategy selected')
  + btn(s2, 1233.3, 486, 1254.5, 500.8, '<b>Pricing</b><br>Monte-Carlo<br>Simulation') + btn(s2, 1233.3, 516, 1254.5, 529.3, '<b>Actualise<br>Histogram</b>')
  + btn(s2, 917.7, 537.7, 978.8, 550.9, '<b>Short this current strategy</b><br>(switch long and short positions)') + btn(s2, 789.3, 609.7, 857.9, 619.5, '<b>Replicate</b> first column parameters to all<br>columns') + btn(s2, 789.3, 653, 857.9, 663.5, '<b>Replicate</b> first column parameters to all<br>columns')
  + btn(s2, 860, 653, 888.2, 663.5, '<b>Use Default</b><br>option prices (BS)') + btn(s2, 787.9, 670.2, 886.3, 680, '<b>Calculate Payoff &amp; Greeks</b>')
  + `<div class="obj drop" style="${at(s2, 1018.8, 480.6, 1023.5, 485.2)};font-size:3px">▼</div>` + histogram();

document.getElementById('win1').innerHTML = chrome('Option', 'Call', '#777') + sheet({ ...s1, cells: cells1, objects: objects1 });
document.getElementById('win2').innerHTML = chrome('defaultStrategy', 'Long Call Butterfly', '#e6e6e6') + sheet({ ...s2, cells: cells2, objects: objects2 }) + plots('1', 'Month(s)', '0.085', charts.slice(0, 3));
document.getElementById('panel').innerHTML = plots('10', 'Year(s)', '0.082', charts);
```
